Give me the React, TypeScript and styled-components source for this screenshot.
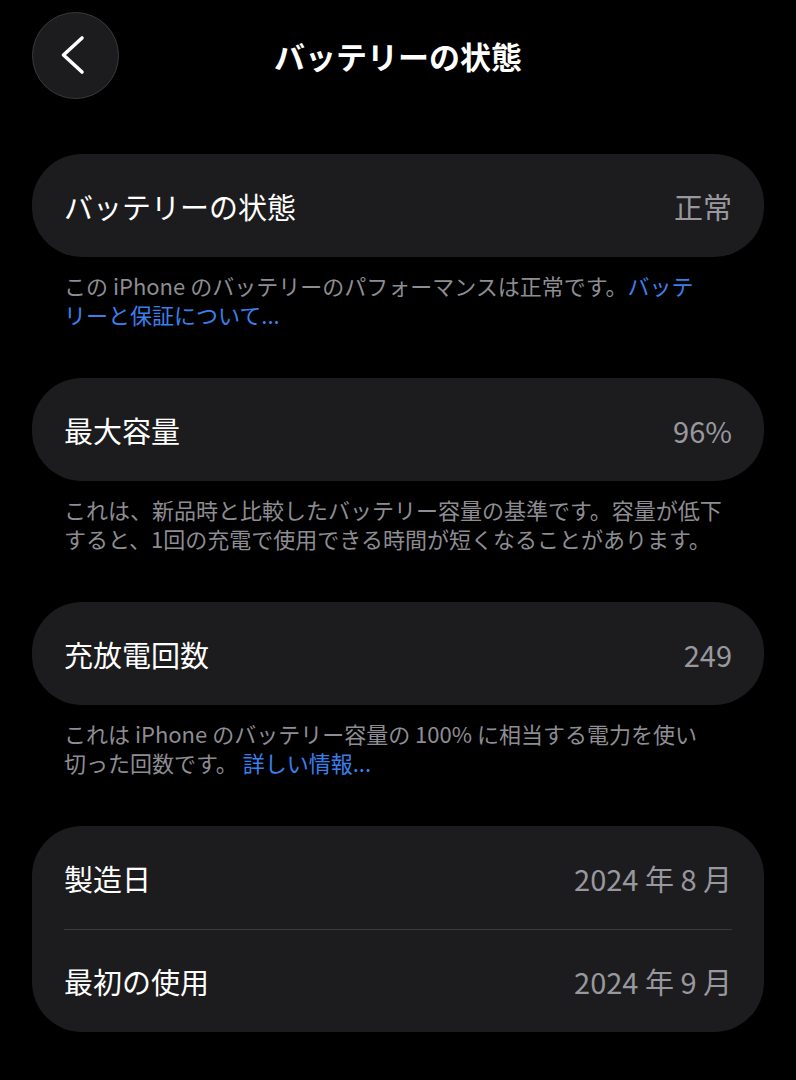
import styled, { createGlobalStyle } from "styled-components";

const GlobalStyle = createGlobalStyle`
  html, body {
    margin: 0;
    padding: 0;
    background: #000;
  }
  body {
    font-family: "Noto Sans CJK JP", "Noto Sans", sans-serif;
    color: #fff;
  }
`;

const Page = styled.div`
  width: 796px;
  min-height: 1080px;
  background: #000;
  padding: 12px 32px 0;
  box-sizing: border-box;
`;

const Header = styled.header`
  display: grid;
  grid-template-columns: 87px 1fr 87px;
  align-items: center;
  height: 87px;
`;

const BackButton = styled.button`
  width: 87px;
  height: 87px;
  padding: 0;
  border-radius: 50%;
  background: #1c1c1e;
  border: 1px solid #3a3a3c;
  box-sizing: border-box;
  display: flex;
  align-items: center;
  justify-content: center;
  overflow: hidden;

  svg {
    flex: none;
  }
`;

const Title = styled.h1`
  margin: 0;
  text-align: center;
  font-size: 31px;
  font-weight: 700;
  color: #fff;
`;

const List = styled.div`
  display: flex;
  flex-direction: column;
  gap: 49px;
  margin-top: 55px;
`;

const Section = styled.section`
  display: flex;
  flex-direction: column;
`;

const Card = styled.div`
  background: #1c1c1e;
  border-radius: 50px;
  padding: 0 32px;
`;

const CardRow = styled.div<{ $divider: boolean }>`
  height: 103px;
  display: flex;
  align-items: center;
  justify-content: space-between;
  border-top: ${(p) => (p.$divider ? "1.5px solid #3a3a3c" : "none")};
  box-sizing: border-box;
`;

const Label = styled.span`
  font-size: 29px;
  color: #fff;
`;

const Value = styled.span`
  font-size: 29px;
  color: #98989e;
`;

const Note = styled.p`
  margin: 14px 0 0;
  padding: 0 32px;
  font-size: 22px;
  line-height: 29px;
  color: #8d8d93;
`;

const Link = styled.span`
  color: #3a80ec;
`;

type Row = { label: string; value: string };

const sections: { rows: Row[]; note?: React.ReactNode }[] = [
  {
    rows: [{ label: "バッテリーの状態", value: "正常" }],
    note: (
      <>
        この iPhone のバッテリーのパフォーマンスは正常です。<Link>バッテ<br />リーと保証について...</Link>
      </>
    ),
  },
  {
    rows: [{ label: "最大容量", value: "96%" }],
    note: (
      <>
        これは、新品時と比較したバッテリー容量の基準です。容量が低下<br />
        すると、1回の充電で使用できる時間が短くなることがあります。
      </>
    ),
  },
  {
    rows: [{ label: "充放電回数", value: "249" }],
    note: (
      <>
        これは iPhone のバッテリー容量の 100% に相当する電力を使い<br />
        切った回数です。 <Link>詳しい情報...</Link>
      </>
    ),
  },
  {
    rows: [
      { label: "製造日", value: "2024 年 8 月" },
      { label: "最初の使用", value: "2024 年 9 月" },
    ],
  },
];

export default function App() {
  return (
    <>
      <GlobalStyle />
      <Page>
        <Header>
          <BackButton aria-label="戻る">
            <svg width="87" height="87" viewBox="0 0 87 87">
              <path
                d="M50 26 L31.5 43 L50 60"
                fill="none"
                stroke="#fff"
                strokeWidth="3.6"
                strokeLinecap="round"
                strokeLinejoin="round"
              />
            </svg>
          </BackButton>
          <Title>バッテリーの状態</Title>
          <span />
        </Header>

        <List>
          {sections.map((s, i) => (
            <Section key={i}>
              <Card>
                {s.rows.map((r, j) => (
                  <CardRow key={r.label} $divider={j > 0}>
                    <Label>{r.label}</Label>
                    <Value>{r.value}</Value>
                  </CardRow>
                ))}
              </Card>
              {s.note && <Note>{s.note}</Note>}
            </Section>
          ))}
        </List>
      </Page>
    </>
  );
}
